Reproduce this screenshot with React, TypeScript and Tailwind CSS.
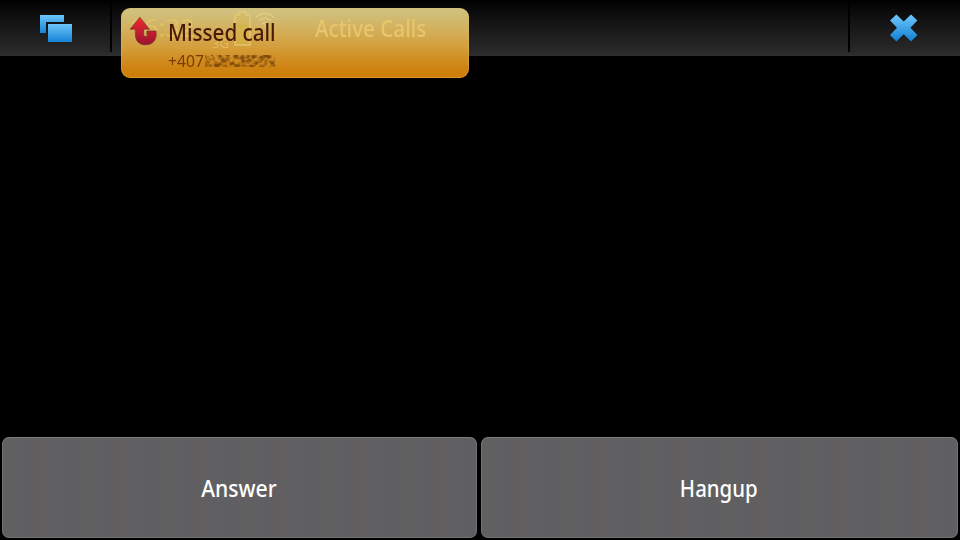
import type { ReactNode } from "react";

function WindowsIcon() {
  return (
    <svg width="36" height="32" viewBox="0 0 36 32" className="block">
      <defs>
        <linearGradient id="win" x1="0" y1="0" x2="0" y2="1">
          <stop offset="0" stopColor="#6cc5fb" />
          <stop offset="1" stopColor="#1583d4" />
        </linearGradient>
      </defs>
      <path d="M2 2H26V9H8V20H2Z" fill="url(#win)" />
      <rect x="10" y="11" width="24" height="18" fill="url(#win)" />
    </svg>
  );
}

function CloseIcon() {
  return (
    <svg width="30" height="30" viewBox="0 0 30 30" className="block">
      <defs>
        <linearGradient id="cross" x1="0" y1="0" x2="0" y2="1">
          <stop offset="0" stopColor="#70c8ff" />
          <stop offset="1" stopColor="#117fd2" />
        </linearGradient>
      </defs>
      <path
        d="M7.4 1.4L14.7 8.6L22 1.4L28.4 7.6L21.4 14.8L28.4 22L22 28.4L14.7 21.2L7.4 28.4L1 22L8 14.8L1 7.6Z"
        fill="url(#cross)"
      />
    </svg>
  );
}

function MissedIcon() {
  return (
    <svg width="30" height="31" viewBox="0 0 30 31" className="block">
      <defs>
        <linearGradient id="missed" x1="0" y1="0" x2="0" y2="1">
          <stop offset="0" stopColor="#ee2c2f" />
          <stop offset="1" stopColor="#9c1230" />
        </linearGradient>
      </defs>
      <path
        d="M10.8 1.2L20.4 13.2H14.6V19.6C15.6 20.6 17.6 20.6 18.6 19.8V18.8H17.8V15H27.2V18C27.2 25 23 28.8 16.6 28.8C10.4 28.8 6.4 25 6.4 18.4V13.2H1.2Z"
        fill="url(#missed)"
        stroke="#6d3428"
        strokeOpacity="0.65"
        strokeWidth="1"
      />
    </svg>
  );
}

function BatteryIcon() {
  return (
    <svg width="17" height="36" viewBox="0 0 17 36" className="block">
      <path
        d="M5 4V1H12V4H16V34H1V4Z"
        fill="#dabb57"
        fillOpacity="0.35"
        stroke="#e8cc79"
        strokeOpacity="0.75"
        strokeWidth="1.6"
      />
      <rect x="3" y="12" width="11" height="20" fill="#d3b43c" fillOpacity="0.5" />
    </svg>
  );
}

function SignalIcon() {
  return (
    <svg width="20" height="16" viewBox="0 0 20 16" className="block" fill="none" stroke="#e8d28c" strokeWidth="1.6">
      <path d="M1 5.6C6 .2 14 .2 19 5.6M4 8.8C7.5 5 12.5 5 16 8.8M7 12C9 10 11 10 13 12" />
      <circle cx="10" cy="13.6" r="1" fill="#e8d28c" stroke="none" />
    </svg>
  );
}

function Smudge() {
  return (
    <svg width="70" height="12" viewBox="0 0 70 12" className="block">
      <filter id="smudge" x="0" y="0" width="100%" height="100%" colorInterpolationFilters="sRGB">
        <feTurbulence type="fractalNoise" baseFrequency="0.2 0.24" numOctaves="2" seed="21" />
        <feColorMatrix values="0 0 0 0 0.5  0 0 0 0 0.29  0 0 0 0 0.04  3 0 0 0 -1.1" />
      </filter>
      <rect width="70" height="12" filter="url(#smudge)" />
    </svg>
  );
}

function Divider() {
  return <div className="h-13 w-0.5 bg-black" />;
}

function ActionButton({ className, children }: { className: string; children: ReactNode }) {
  return (
    <button
      className={`flex h-[101px] items-center justify-center rounded-[7px] border border-[#737173] border-t-[#7d7b7d] bg-[#605e60] bg-[repeating-linear-gradient(90deg,#615f60_0px,#5f6063_20px,#605e60_30px,#615f60_40px)] pt-px text-2xl font-medium text-white ${className}`}
    >
      {children}
    </button>
  );
}

function MissedCallBanner() {
  return (
    <div className="absolute top-2 left-[121px] h-[70px] w-[348px] overflow-hidden rounded-[9px] border border-[#dcb968]/40 border-b-[#e0962c] bg-[linear-gradient(#cfc383_0%,#d2b464_25%,#d49f3c_55%,#cf8413_84%,#cc7c05_100%)] bg-origin-border">
      <div className="absolute top-0 left-0 text-[#e8c66c]">
        <span className="absolute top-0.5 left-[7px] origin-left scale-x-[.99] text-[26px] leading-8 opacity-70">16:32</span>
        <span className="absolute top-6 left-[90px] text-[13px] leading-5 opacity-70">3G</span>
        <div className="absolute top-0.5 left-28"><BatteryIcon /></div>
        <div className="absolute top-[3px] left-[133px] opacity-70"><SignalIcon /></div>
        <span className="absolute top-[3px] left-[193px] origin-left scale-x-[.86] text-2xl leading-8 font-medium whitespace-nowrap">
          Active Calls
        </span>
      </div>
      <div className="relative flex pt-[7px] pl-[7px]">
        <MissedIcon />
        <div className="pl-[9px]">
          <div className="origin-left scale-x-[.86] text-2xl leading-8 font-medium whitespace-nowrap text-[#4a1804]">
            Missed call
          </div>
          <div className="flex h-6 items-center pt-0.5 text-base text-[#7a3b05]">
            <span className="w-[37px] origin-left scale-x-[.98] leading-6">+407</span>
            <Smudge />
          </div>
        </div>
      </div>
    </div>
  );
}

export default function App() {
  return (
    <div className="relative flex h-[540px] w-[960px] flex-col justify-between overflow-hidden bg-black font-['Noto_Sans','Open_Sans',sans-serif]">
      <header className="flex h-14 bg-[linear-gradient(#000_0%,#0b0b0b_20%,#1c1c1c_60%,#2b2b2b_96%,#303030_100%)]">
        <div className="flex w-[110px] pt-[13px] pl-[38px]">
          <WindowsIcon />
        </div>
        <Divider />
        <div className="flex-1" />
        <Divider />
        <div className="flex w-[110px] pt-[13px] pl-[39px]">
          <CloseIcon />
        </div>
      </header>
      <MissedCallBanner />
      <footer className="flex gap-1 px-0.5 pb-0.5">
        <ActionButton className="w-[475px]">
          <span className="-translate-x-px scale-x-[.88]">Answer</span>
        </ActionButton>
        <ActionButton className="w-[477px]">
          <span className="-translate-x-px scale-x-[.85]">Hangup</span>
        </ActionButton>
      </footer>
    </div>
  );
}
